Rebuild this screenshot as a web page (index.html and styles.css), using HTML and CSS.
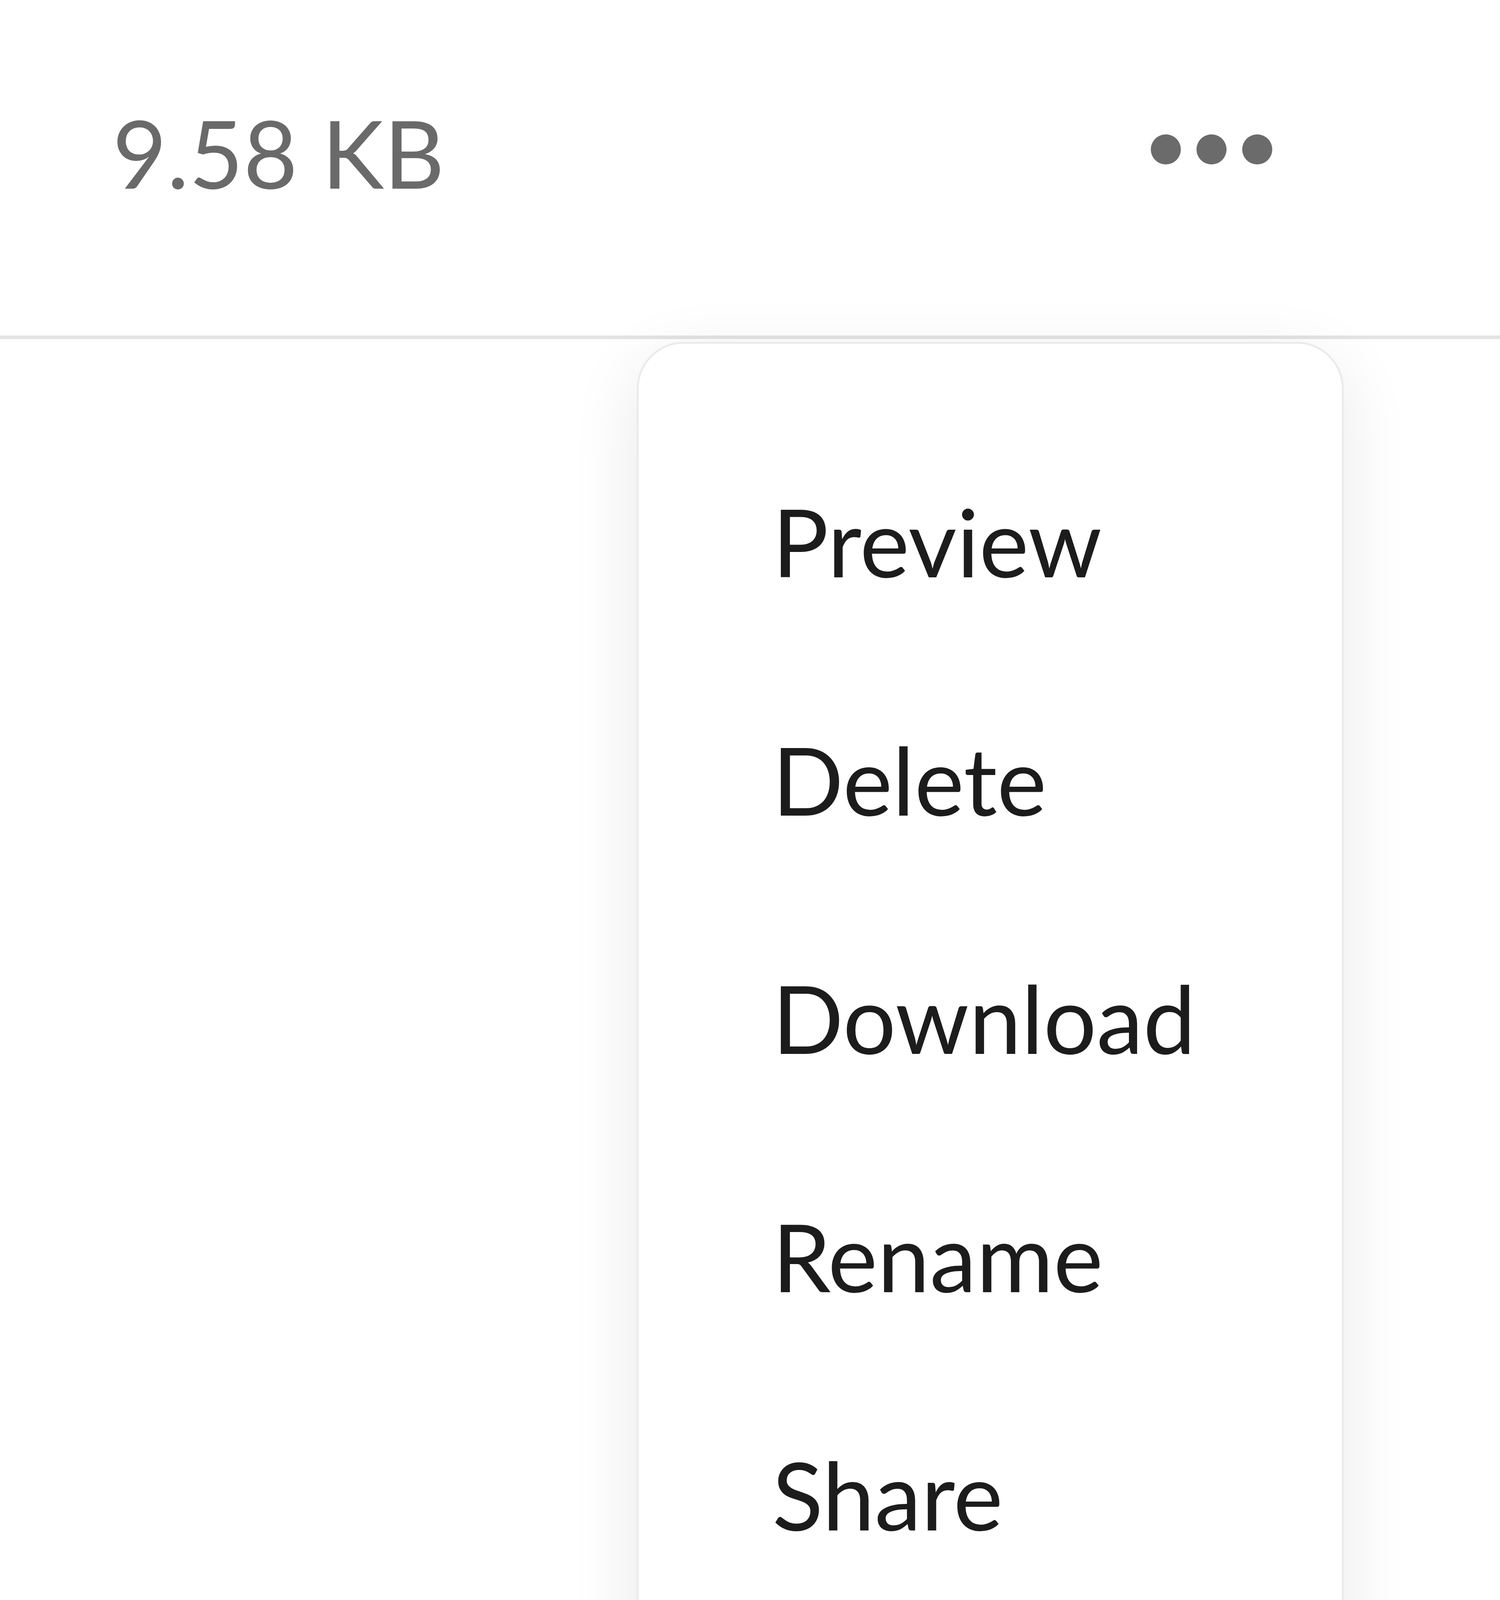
FILE: index.html
```html
<!DOCTYPE html>
<html lang="en">
<head>
<meta charset="utf-8">
<title>File menu</title>
<link rel="stylesheet" href="styles.css">
</head>
<body>
<div class="page">
  <div class="file-row">
    <span class="file-size">9.58 KB</span>
    <button class="more-btn" aria-label="More actions">
      <span class="dot"></span><span class="dot"></span><span class="dot"></span>
    </button>
  </div>
  <ul class="menu">
    <li class="menu-item">Preview</li>
    <li class="menu-item">Delete</li>
    <li class="menu-item">Download</li>
    <li class="menu-item">Rename</li>
    <li class="menu-item">Share</li>
  </ul>
</div>
</body>
</html>
```
FILE: styles.css
```css
html, body {
  margin: 0;
  padding: 0;
  background: #ffffff;
}
body {
  font-family: Lato, "Open Sans", "Liberation Sans", sans-serif;
}
.page {
  position: relative;
  min-height: 100vh;
}
.file-row {
  display: flex;
  align-items: center;
  justify-content: space-between;
  box-sizing: border-box;
  height: 868px;
  padding: 250px 583px 330px 288px;
  border-bottom: 9px solid #e3e3e3;
}
.file-size {
  font-size: 240px;
  line-height: 288px;
  color: #6a6a6a;
}
.more-btn {
  display: flex;
  gap: 40px;
  align-items: center;
  margin: 0 0 14px 0;
  padding: 0;
  border: 0;
  background: transparent;
}
.dot {
  display: block;
  width: 77px;
  height: 77px;
  border-radius: 50%;
  background: #6b6b6b;
}
.menu {
  position: absolute;
  left: 1630px;
  top: 875px;
  width: 1810px;
  height: 3453px;
  box-sizing: border-box;
  margin: 0;
  padding: 200px 0;
  list-style: none;
  background: #ffffff;
  border: 5px solid #ebebeb;
  border-radius: 120px;
  box-shadow: 0 50px 180px rgba(0, 0, 0, 0.09);
}
.menu-item {
  height: 610px;
  line-height: 610px;
  padding-left: 342px;
  font-size: 240px;
  color: #1c1c1c;
}
```
